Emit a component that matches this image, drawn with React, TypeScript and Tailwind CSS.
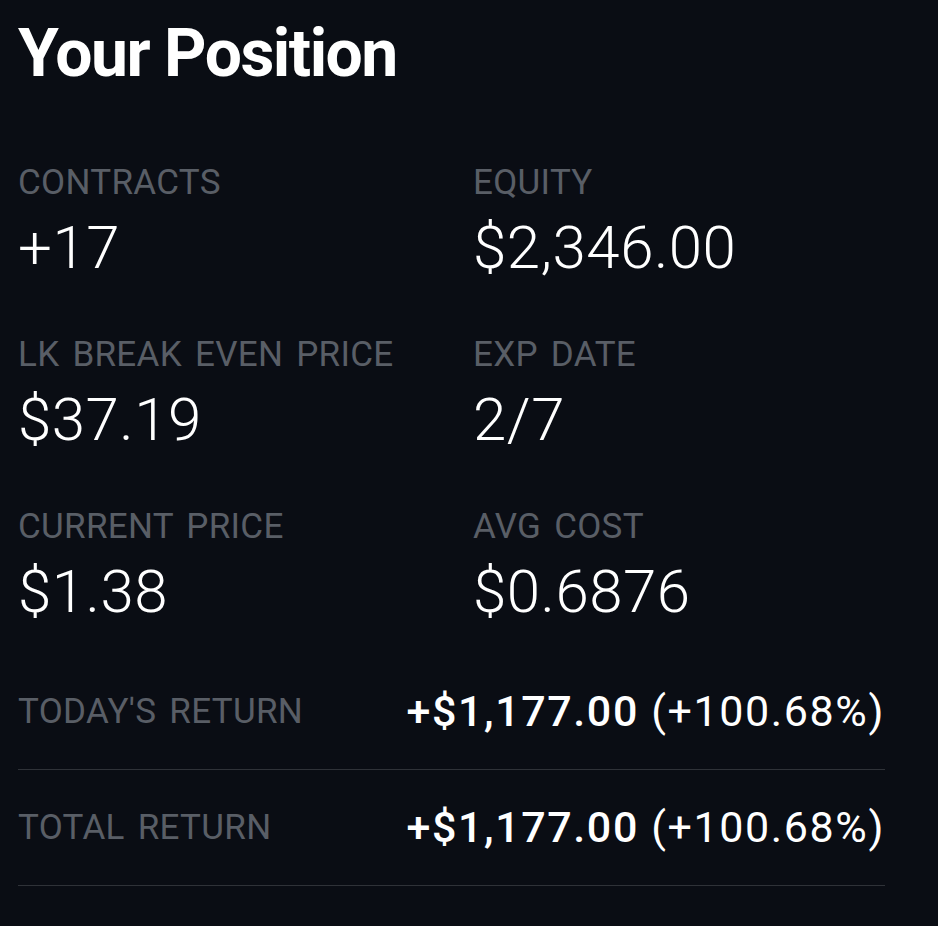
import React from "react";

const font = { fontFamily: "Roboto, 'Noto Sans', sans-serif" };

function Stat({ label, value }: { label: string; value: string }) {
  return (
    <div className="flex flex-col">
      <div className="text-[35px] leading-none text-[#595e66] tracking-[0.3px] [word-spacing:4px]">{label}</div>
      <div className="mt-[18px] text-[60px] leading-none font-light text-white tracking-[0.5px]">{value}</div>
    </div>
  );
}

function ReturnRow({ label, amount, pct }: { label: string; amount: string; pct: string }) {
  return (
    <div className="flex h-[116px] items-center justify-between border-b border-[#2f3238]">
      <div className="text-[35px] leading-none text-[#595e66] tracking-[0.3px] [word-spacing:4px]">{label}</div>
      <div className="text-[43px] leading-none text-white tracking-[1.6px]">
        <span className="font-medium">{amount}</span>{" "}
        <span className="font-normal">{pct}</span>
      </div>
    </div>
  );
}

export default function App() {
  return (
    <div className="min-h-[926px] w-full bg-[#0a0d14]" style={font}>
      <div className="pl-[18px] pr-[53px] pt-[21px]">
        <h1 className="text-[66px] leading-none font-bold text-white tracking-[-1.5px]">Your Position</h1>
        <div className="mt-[78px] grid grid-cols-[455px_1fr] gap-y-[59px]">
          <Stat label="CONTRACTS" value="+17" />
          <Stat label="EQUITY" value="$2,346.00" />
          <Stat label="LK BREAK EVEN PRICE" value="$37.19" />
          <Stat label="EXP DATE" value="2/7" />
          <Stat label="CURRENT PRICE" value="$1.38" />
          <Stat label="AVG COST" value="$0.6876" />
        </div>
        <div className="mt-[32px]">
          <ReturnRow label="TODAY'S RETURN" amount="+$1,177.00" pct="(+100.68%)" />
          <ReturnRow label="TOTAL RETURN" amount="+$1,177.00" pct="(+100.68%)" />
        </div>
      </div>
    </div>
  );
}
